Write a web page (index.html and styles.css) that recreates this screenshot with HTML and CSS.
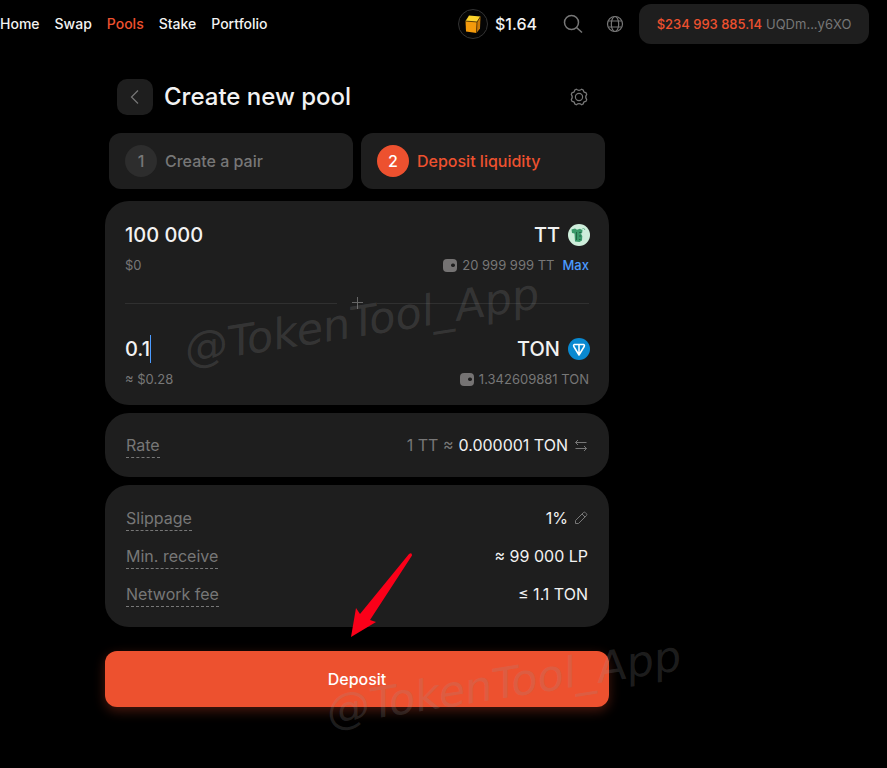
FILE: index.html
```html
<!DOCTYPE html>
<html lang="en">
<head>
<meta charset="utf-8">
<meta name="viewport" content="width=device-width, initial-scale=1">
<title>Create new pool</title>
<link rel="stylesheet" href="styles.css">
</head>
<body>
<header class="topbar">
  <nav class="nav">
    <a href="#">Home</a>
    <a href="#">Swap</a>
    <a href="#" class="active" aria-current="page">Pools</a>
    <a href="#">Stake</a>
    <a href="#">Portfolio</a>
  </nav>
  <div class="tools">
    <a href="#" class="price">
      <svg width="30" height="30" viewBox="0 0 30 30" aria-hidden="true">
        <circle cx="15" cy="15" r="14.5" fill="#050505" stroke="#333"/>
        <path d="M11 6.500 22.500 7.500 19 13 7.500 12Z" fill="#fdd32b"/>
        <path d="M7.500 12 19 13 18.500 24 8 22.500Z" fill="#f39a0c"/>
        <path d="M19 13 22.500 7.500 22 19.500 18.500 24Z" fill="#c97a08"/>
        <path d="M7.500 12 19 13 22.500 7.500M19 13 18.500 24" fill="none" stroke="#352306" stroke-width=".7"/>
      </svg>
      <span>$1.64</span>
    </a>
    <button class="icon-btn search" aria-label="Search">
      <svg width="20" height="20" viewBox="0 0 20 20"><circle cx="8.500" cy="8.500" r="7"/><path d="M13.500 13.500 19 18.500"/></svg>
    </button>
    <button class="icon-btn globe" aria-label="Language">
      <svg width="18" height="18" viewBox="0 0 18 18"><circle cx="9" cy="9" r="7.500"/><ellipse cx="9" cy="9" rx="3.700" ry="7.500"/><path d="M2.500 6h13M2.500 12h13"/></svg>
    </button>
    <button class="wallet"><span class="balance">$234 993 885.14</span><span>UQDm...y6XO</span></button>
  </div>
</header>

<main class="page">
  <div class="heading">
    <button class="back" aria-label="Back">
      <svg width="16" height="16" viewBox="0 0 16 16"><path d="M11 1.500 4.500 8l6.500 6.500"/></svg>
    </button>
    <h1>Create new pool</h1>
    <button class="icon-btn settings" aria-label="Settings">
      <svg width="18" height="18" viewBox="0 0 18 18"><path d="M6.300 1.300Q9 3.300 11.700 1.300L13.300 2.100Q13.300 4.700 15.900 4.700L16.700 6.300Q14.700 9 16.700 11.700L15.900 13.300Q13.300 13.300 13.300 15.900L11.700 16.700Q9 14.700 6.300 16.700L4.700 15.900Q4.700 13.300 2.100 13.300L1.300 11.700Q3.300 9 1.300 6.300L2.100 4.700Q4.700 4.700 4.700 2.100Z"/><circle cx="9" cy="9" r="3.600"/></svg>
    </button>
  </div>

  <ol class="steps">
    <li><span class="num">1</span>Create a pair</li>
    <li class="current" aria-current="step"><span class="num">2</span>Deposit liquidity</li>
  </ol>

  <form class="form">
    <section class="card amounts">
      <div class="row big">
        <input type="text" aria-label="TT amount" value="100 000">
        <span class="token">TT
          <svg width="22" height="22" viewBox="0 0 22 22" aria-hidden="true">
            <circle cx="11" cy="11" r="11" fill="#ceeedb"/>
            <path d="M3.500 5.500 7 4.500l2 1.200 3-1 2.500 1.500-.5 3.300-1.500-.5 1.800 3-.3 4.500-2.500 1.500-4.500-.5-.5-8-2.500-.5Z" fill="#3a996a"/>
            <path d="M8.500 8v8M11 8.500h2M11 12h2M11 15.500h1.500" stroke="#216545" fill="none"/>
            <path d="M14 5.500 15.500 4 17 6" stroke="#64b98b" fill="none"/>
          </svg>
        </span>
      </div>
      <div class="row small">
        <span>$0</span>
        <span class="held">
          <svg width="16" height="14" viewBox="0 0 16 14" aria-hidden="true"><rect x="1" y="1" width="14" height="13" rx="4" fill="#757373"/><rect x="9" y="5.500" width="4" height="3.500" rx="1.700" fill="#1e1e1e"/></svg>
          20 999 999 TT
          <button type="button" class="max">Max</button>
        </span>
      </div>
      <div class="divider">
        <svg width="12" height="12" viewBox="0 0 12 12" aria-hidden="true"><path d="M6.500 0v12M1 5.500h11"/></svg>
      </div>
      <div class="row big">
        <input type="text" class="focused" aria-label="TON amount" value="0.1">
        <span class="token">TON
          <svg width="22" height="22" viewBox="0 0 22 22" aria-hidden="true">
            <circle cx="11" cy="11" r="11" fill="#0989d1"/>
            <path d="M6.500 6.500h9q1.400.5.700 2L11 17 5.800 8.500q-.7-1.500.7-2ZM11 6.500V17" fill="none" stroke="#fff" stroke-width="1.500" stroke-linejoin="round"/>
          </svg>
        </span>
      </div>
      <div class="row small">
        <span>≈ $0.28</span>
        <span class="held">
          <svg width="16" height="14" viewBox="0 0 16 14" aria-hidden="true"><rect x="1" y="1" width="14" height="13" rx="4" fill="#757373"/><rect x="9" y="5.500" width="4" height="3.500" rx="1.700" fill="#1e1e1e"/></svg>
          1.342609881 TON
        </span>
      </div>
    </section>

    <dl class="card details">
      <div class="line">
        <dt>Rate</dt>
        <dd><span class="muted">1 TT ≈</span> 0.000001 TON
          <button type="button" class="icon-btn" aria-label="Invert rate"><svg width="14" height="14" viewBox="0 0 14 14"><path d="M12.500 4.500H1.500M4 2 1.500 4.500 4 7M1.500 10.500h11M10 8l2.500 2.500L10 13"/></svg></button>
        </dd>
      </div>
    </dl>

    <dl class="card details">
      <div class="line">
        <dt>Slippage</dt>
        <dd>1%
          <button type="button" class="icon-btn" aria-label="Edit slippage"><svg width="14" height="14" viewBox="0 0 14 14"><path d="M1.500 9.500 9.500 1.500q1-.8 2 .2l.8.8q1 1 .2 2l-8 8H1.500ZM8 3l3 3"/></svg></button>
        </dd>
      </div>
      <div class="line"><dt>Min. receive</dt><dd>≈ 99 000 LP</dd></div>
      <div class="line"><dt>Network fee</dt><dd>≤ 1.1 TON</dd></div>
    </dl>

    <button type="submit" class="deposit">Deposit</button>
  </form>

  <span class="watermark first">@TokenTool_App</span>
  <span class="watermark second">@TokenTool_App</span>
  <svg class="arrow" width="64" height="86" viewBox="0 0 64 86" aria-hidden="true"><path d="M59 3q3-2 3 1.500L20 69l6 2L1 86 6 57l4 6Z" fill="#fb0019"/></svg>
</main>
</body>
</html>
```
FILE: styles.css
```css
* { box-sizing: border-box; }

body {
  margin: 0;
  background: #000;
  color: #f2f2f2;
  font-family: Inter, "Liberation Sans", sans-serif;
  font-size: 16px;
}

button, input {
  font: inherit;
  color: inherit;
  background: none;
  border: 0;
  padding: 0;
}

a { color: inherit; text-decoration: none; }

.topbar {
  display: flex;
  justify-content: space-between;
  align-items: center;
  height: 48px;
  padding-right: 18px;
}

.nav { display: flex; gap: 15px; font-size: 14px; line-height: 18px; font-weight: 500; }
.active { color: #ed512f; }

.tools { display: flex; align-items: center; }
.price { display: flex; align-items: center; gap: 7px; font-weight: 500; margin-right: 26px; }

.icon-btn { display: flex; color: #777; }
.icon-btn svg, .back svg, .divider svg { fill: none; stroke: currentColor; stroke-width: 1; }
.icon-btn.search svg { stroke-width: 1.5; }
.icon-btn.globe svg, .icon-btn.settings svg, .back svg { stroke-width: 1.2; }
.globe { margin: 0 15px 0 23px; }

.wallet {
  display: flex;
  align-items: center;
  justify-content: center;
  gap: 4px;
  width: 230px;
  height: 40px;
  border-radius: 12px;
  background: #1e1e1e;
  color: #777;
  font-size: 13px;
}
.balance { color: #ed512f; font-weight: 500; }

.page {
  position: relative;
  max-width: 504px;
  margin: 31px 0 0 105px;
  padding-bottom: 60px;
}

.heading { display: flex; align-items: center; padding: 0 21px 0 12px; }
.heading h1 { flex: 1; margin: 0 0 0 11px; font-size: 24px; line-height: 36px; font-weight: 500; }
.back {
  display: grid;
  place-items: center;
  width: 36px;
  height: 36px;
  border-radius: 10px;
  background: #1e1e1e;
  color: #777;
}

.steps {
  display: grid;
  grid-template-columns: 1fr 1fr;
  gap: 8px;
  margin: 18px 4px 12px;
  padding: 0;
  list-style: none;
}
.steps li {
  display: flex;
  align-items: center;
  gap: 8px;
  height: 56px;
  padding: 0 16px;
  border-radius: 12px;
  background: #1e1e1e;
  color: #777;
  font-weight: 500;
}
.num {
  display: grid;
  place-items: center;
  width: 32px;
  height: 32px;
  border-radius: 50%;
  background: #2d2d2d;
}
.steps .current { color: #ed512f; }
.current .num { background: #ed512f; color: #fff; }

.form { display: flex; flex-direction: column; gap: 8px; }
.card { margin: 0; padding: 14px 21px; border-radius: 24px; background: #1e1e1e; }
.amounts { padding: 20px 20px 16px; }

.row { display: flex; align-items: center; justify-content: space-between; }
.big { font-size: 20px; line-height: 28px; font-weight: 500; }
.big input { field-sizing: content; height: 28px; }
.big .focused { border-right: 1px solid #4b9bff; }
.token { display: flex; align-items: center; gap: 8px; margin-right: -1px; }
.small { margin-top: 6px; font-size: 13px; line-height: 20px; color: #777; }
.held { display: flex; align-items: center; gap: 4px; }
.max { margin-left: 4px; color: #4b9bff; font-weight: 500; }

.divider {
  display: flex;
  align-items: center;
  gap: 14px;
  height: 16px;
  margin: 20px 0 24px;
  color: #666;
}
.divider::before, .divider::after { content: ""; flex: 1; height: 1px; background: #303030; }

.line { display: flex; align-items: center; justify-content: space-between; height: 38px; }
.line:only-child { height: 36px; }
.line dt { line-height: 24px; border-bottom: 1px dashed #777; color: #777; }
.line dd { display: flex; align-items: center; gap: 5px; margin: 0; }
.muted { color: #777; }
.line .icon-btn { margin-left: 1px; }

.deposit {
  height: 56px;
  margin-top: 16px;
  border-radius: 12px;
  background: #ed512f;
  color: #fff;
  font-weight: 500;
  box-shadow: 0 4px 12px rgba(237, 81, 47, .3);
}

.watermark {
  position: absolute;
  color: rgba(150, 150, 150, .2);
  font: 43px/56px "DejaVu Sans", sans-serif;
  white-space: nowrap;
  transform: skewY(-9deg);
  pointer-events: none;
}
.first { left: 80px; top: 214px; }
.second { left: 222px; top: 576px; }

.arrow { position: absolute; left: 245px; top: 472px; pointer-events: none; }
```
